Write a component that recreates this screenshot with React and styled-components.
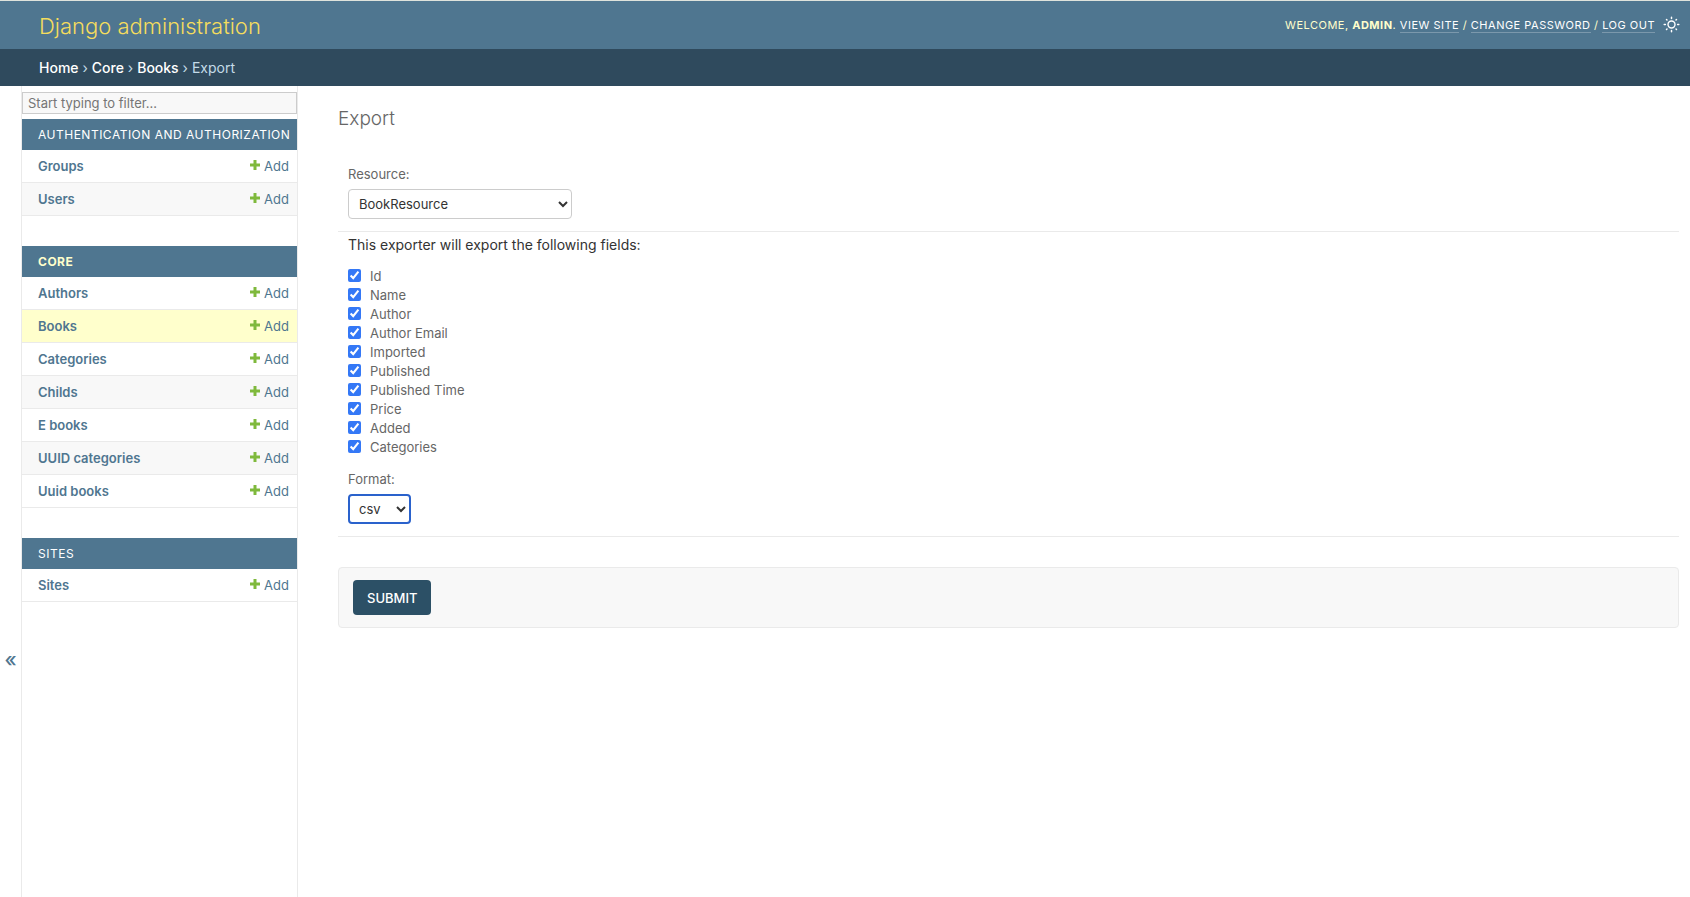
import styled, { createGlobalStyle } from "styled-components"


const GlobalStyle = createGlobalStyle`
    *, *::before, *::after {
        box-sizing: border-box;
    }
    body {
        margin: 0;
        background-color: #fff;
        color: #333;
        font-family: Inter, "Liberation Sans", sans-serif;
        font-size: 14px;
    }
    a {
        text-decoration: none;
    }
`
const Page = styled.div`
    display: flex;
    flex-direction: column;
    min-height: 100vh;
    border-top: 1px solid #dfe3dc;
`
const Header = styled.header`
    display: flex;
    justify-content: space-between;
    align-items: center;
    height: 48px;
    padding: 0 10px 0 39px;
    background-color: #4f7690;
    color: #ffffcc;
`
const SiteName = styled.h1`
    margin: 0;
    padding-top: 2px;
    font-size: 22px;
    line-height: 28px;
    font-weight: 300;
`
const SiteLink = styled.a`
    color: #f5dd5d;
`
const UserTools = styled.div`
    display: flex;
    align-items: center;
    gap: 8px;
    padding-bottom: 1px;
    font-size: 11px;
    line-height: 14px;
    letter-spacing: 0.5px;
    text-transform: uppercase;
`
const UserLink = styled.a`
    color: #fff;
    border-bottom: 1px solid rgba(255, 255, 255, 0.25);
`
const ThemeButton = styled.button`
    display: flex;
    padding: 0;
    border: none;
    background: none;
    color: #fff;
    cursor: pointer;
`
const Breadcrumbs = styled.nav`
    height: 37px;
    padding: 0 39px;
    background-color: #2f4a5d;
    color: #c4dce8;
    font-size: 14px;
    line-height: 38px;
`
const Crumb = styled.a`
    color: #fff;
    font-weight: 500;
`
const Main = styled.div`
    display: flex;
    flex: 1;
`
const ToggleButton = styled.button`
    display: flex;
    flex: 0 0 22px;
    align-items: center;
    justify-content: center;
    padding: 336px 0 0;
    border: none;
    border-right: 1px solid #eaeaea;
    background: #fff;
    color: #4f7690;
    font-family: inherit;
    font-size: 20px;
    font-weight: 500;
    cursor: pointer;
`
const Sidebar = styled.nav`
    flex: 0 0 276px;
    padding-top: 6px;
    border-right: 1px solid #eaeaea;
`
const Filter = styled.input`
    display: block;
    width: 100%;
    height: 22px;
    margin-bottom: 5px;
    padding: 0 5px;
    border: 1px solid #ccc;
    background-color: #f8f8f8;
    font-family: inherit;
    font-size: 13px;
    &::placeholder {
        color: #757575;
    }
`
const Module = styled.table`
    width: 100%;
    margin-bottom: 30px;
    border-spacing: 0;
    font-size: 13px;
`
const Caption = styled.caption`
    height: 31px;
    padding-left: 16px;
    background-color: #4f7690;
    font-size: 12px;
    line-height: 31px;
    letter-spacing: 0.5px;
    text-align: left;
    text-transform: uppercase;
    white-space: nowrap;
`
const SectionLink = styled.a`
    color: ${(props) => (props.$current ? "#ffffcc" : "#fff")};
    font-weight: ${(props) => (props.$current ? 700 : 400)};
`
const Row = styled.tr`
    background-color: #fff;
    &:nth-child(even) {
        background-color: ${(props) => (props.$current ? "#ffffcc" : "#f8f8f8")};
    }
`
const ModelCell = styled.th`
    height: 33px;
    padding: 0 8px 0 16px;
    border-bottom: 1px solid #eaeaea;
    text-align: left;
    font-weight: 600;
`
const AddCell = styled.td`
    height: 33px;
    padding: 0 8px;
    border-bottom: 1px solid #eaeaea;
    text-align: right;
`
const ModelLink = styled.a`
    color: #4f7690;
`
const AddLink = styled.a`
    display: inline-flex;
    align-items: center;
    gap: 4px;
    color: #4f7690;
`
const Content = styled.main`
    flex: 1;
    padding: 21px 11px 40px 40px;
`
const Title = styled.h2`
    margin: 0 0 35px;
    color: #666;
    font-size: 19px;
    line-height: 24px;
    font-weight: 300;
`
const FormRow = styled.div`
    padding: 0 10px 12px;
    border-bottom: 1px solid #eaeaea;
`
const Label = styled.label`
    display: block;
    margin-bottom: 7px;
    color: #666;
    font-size: 13px;
    line-height: 16px;
`
const Select = styled.select`
    display: block;
    width: ${(props) => props.$width};
    height: 30px;
    padding: 0 ${(props) => (props.$active ? "5px" : "6px")};
    border: ${(props) => (props.$active ? "2px solid #2a62cc" : "1px solid #ccc")};
    border-radius: 4px;
    background-color: #fff;
    color: #333;
    font-family: inherit;
    font-size: 13px;
    outline: none;
`
const Help = styled.p`
    margin: 4px 0 12px;
    font-size: 14px;
    line-height: 18px;
`
const FieldList = styled.ul`
    margin: 0 0 15px;
    padding: 0;
    list-style: none;
`
const Field = styled.li`
    display: flex;
    align-items: center;
    gap: 9px;
    height: 19px;
    color: #666;
    font-size: 13px;
    line-height: 16px;
`
const Checkbox = styled.input`
    width: 13px;
    height: 13px;
    margin: 0;
    accent-color: #3478f6;
`
const SubmitRow = styled.div`
    margin-top: 30px;
    padding: 12px 14px;
    border: 1px solid #eaeaea;
    border-radius: 4px;
    background-color: #f8f8f8;
`
const SubmitButton = styled.button`
    display: block;
    height: 35px;
    padding: 0 14px;
    border: none;
    border-radius: 4px;
    background-color: #2c5066;
    color: #fff;
    font-family: inherit;
    font-size: 13px;
    font-weight: 500;
    text-transform: uppercase;
    cursor: pointer;
`

const modules = [
  { name: "Authentication and Authorization", models: ["Groups", "Users"] },
  {
    name: "Core",
    current: true,
    models: ["Authors", "Books", "Categories", "Childs", "E books", "UUID categories", "Uuid books"],
  },
  { name: "Sites", models: ["Sites"] },
]

const fields = [
  "Id",
  "Name",
  "Author",
  "Author Email",
  "Imported",
  "Published",
  "Published Time",
  "Price",
  "Added",
  "Categories",
]

const SunIcon = () => (
  <svg width="17" height="17" viewBox="0 0 17 17" fill="none" stroke="currentColor" strokeLinecap="round">
    <circle cx="8.5" cy="8.5" r="3.5" strokeWidth="1.4" />
    <path
      d="M8.5 1.2v1.2M8.5 14.6v1.2M1.2 8.5h1.2M14.6 8.5h1.2M3.5 3.5l.5.5M13 13l.5.5M3.5 13.5l.5-.5M13 4l.5-.5"
      strokeWidth="1.5"
    />
  </svg>
)

const PlusIcon = () => (
  <svg width="10" height="12" viewBox="0 0 10 12">
    <path d="M3.5 0h3v3.5H10v3H6.5V10h-3V6.5H0v-3h3.5z" fill="#7fb93c" />
  </svg>
)

const AppModule = ({ item }) => {
  return (
    <Module>
      <Caption>
        <SectionLink href="#" $current={item.current}>{item.name}</SectionLink>
      </Caption>
      <tbody>
        {item.models.map((model) => (
          <Row key={model} $current={model === "Books"}>
            <ModelCell scope="row">
              <ModelLink href="#">{model}</ModelLink>
            </ModelCell>
            <AddCell>
              <AddLink href="#"><PlusIcon />Add</AddLink>
            </AddCell>
          </Row>
        ))}
      </tbody>
    </Module>
  )
}

const App = () => {
  return (
    <Page>
      <GlobalStyle />
      <Header>
        <SiteName>
          <SiteLink href="#">Django administration</SiteLink>
        </SiteName>
        <UserTools>
          <div>
            Welcome, <strong>admin</strong>. <UserLink href="#">View site</UserLink>
            {" / "}
            <UserLink href="#">Change password</UserLink>
            {" / "}
            <UserLink href="#">Log out</UserLink>
          </div>
          <ThemeButton aria-label="Toggle theme"><SunIcon /></ThemeButton>
        </UserTools>
      </Header>
      <Breadcrumbs aria-label="Breadcrumbs">
        <Crumb href="#">Home</Crumb> › <Crumb href="#">Core</Crumb> › <Crumb href="#">Books</Crumb> › Export
      </Breadcrumbs>
      <Main>
        <ToggleButton aria-label="Toggle navigation">«</ToggleButton>
        <Sidebar aria-label="Sidebar">
          <Filter type="search" placeholder="Start typing to filter..." aria-label="Filter navigation items" />
          {modules.map((item) => (
            <AppModule item={item} key={item.name} />
          ))}
        </Sidebar>
        <Content>
          <Title>Export</Title>
          <form>
            <FormRow>
              <Label htmlFor="resource">Resource:</Label>
              <Select id="resource" $width="224px">
                <option>BookResource</option>
              </Select>
            </FormRow>
            <FormRow>
              <Help>This exporter will export the following fields:</Help>
              <FieldList>
                {fields.map((field) => (
                  <Field key={field}>
                    <Checkbox type="checkbox" id={field} defaultChecked />
                    <label htmlFor={field}>{field}</label>
                  </Field>
                ))}
              </FieldList>
              <Label htmlFor="format">Format:</Label>
              <Select id="format" $width="63px" $active>
                <option>csv</option>
              </Select>
            </FormRow>
            <SubmitRow>
              <SubmitButton type="button">Submit</SubmitButton>
            </SubmitRow>
          </form>
        </Content>
      </Main>
    </Page>
  )
}

export default App
